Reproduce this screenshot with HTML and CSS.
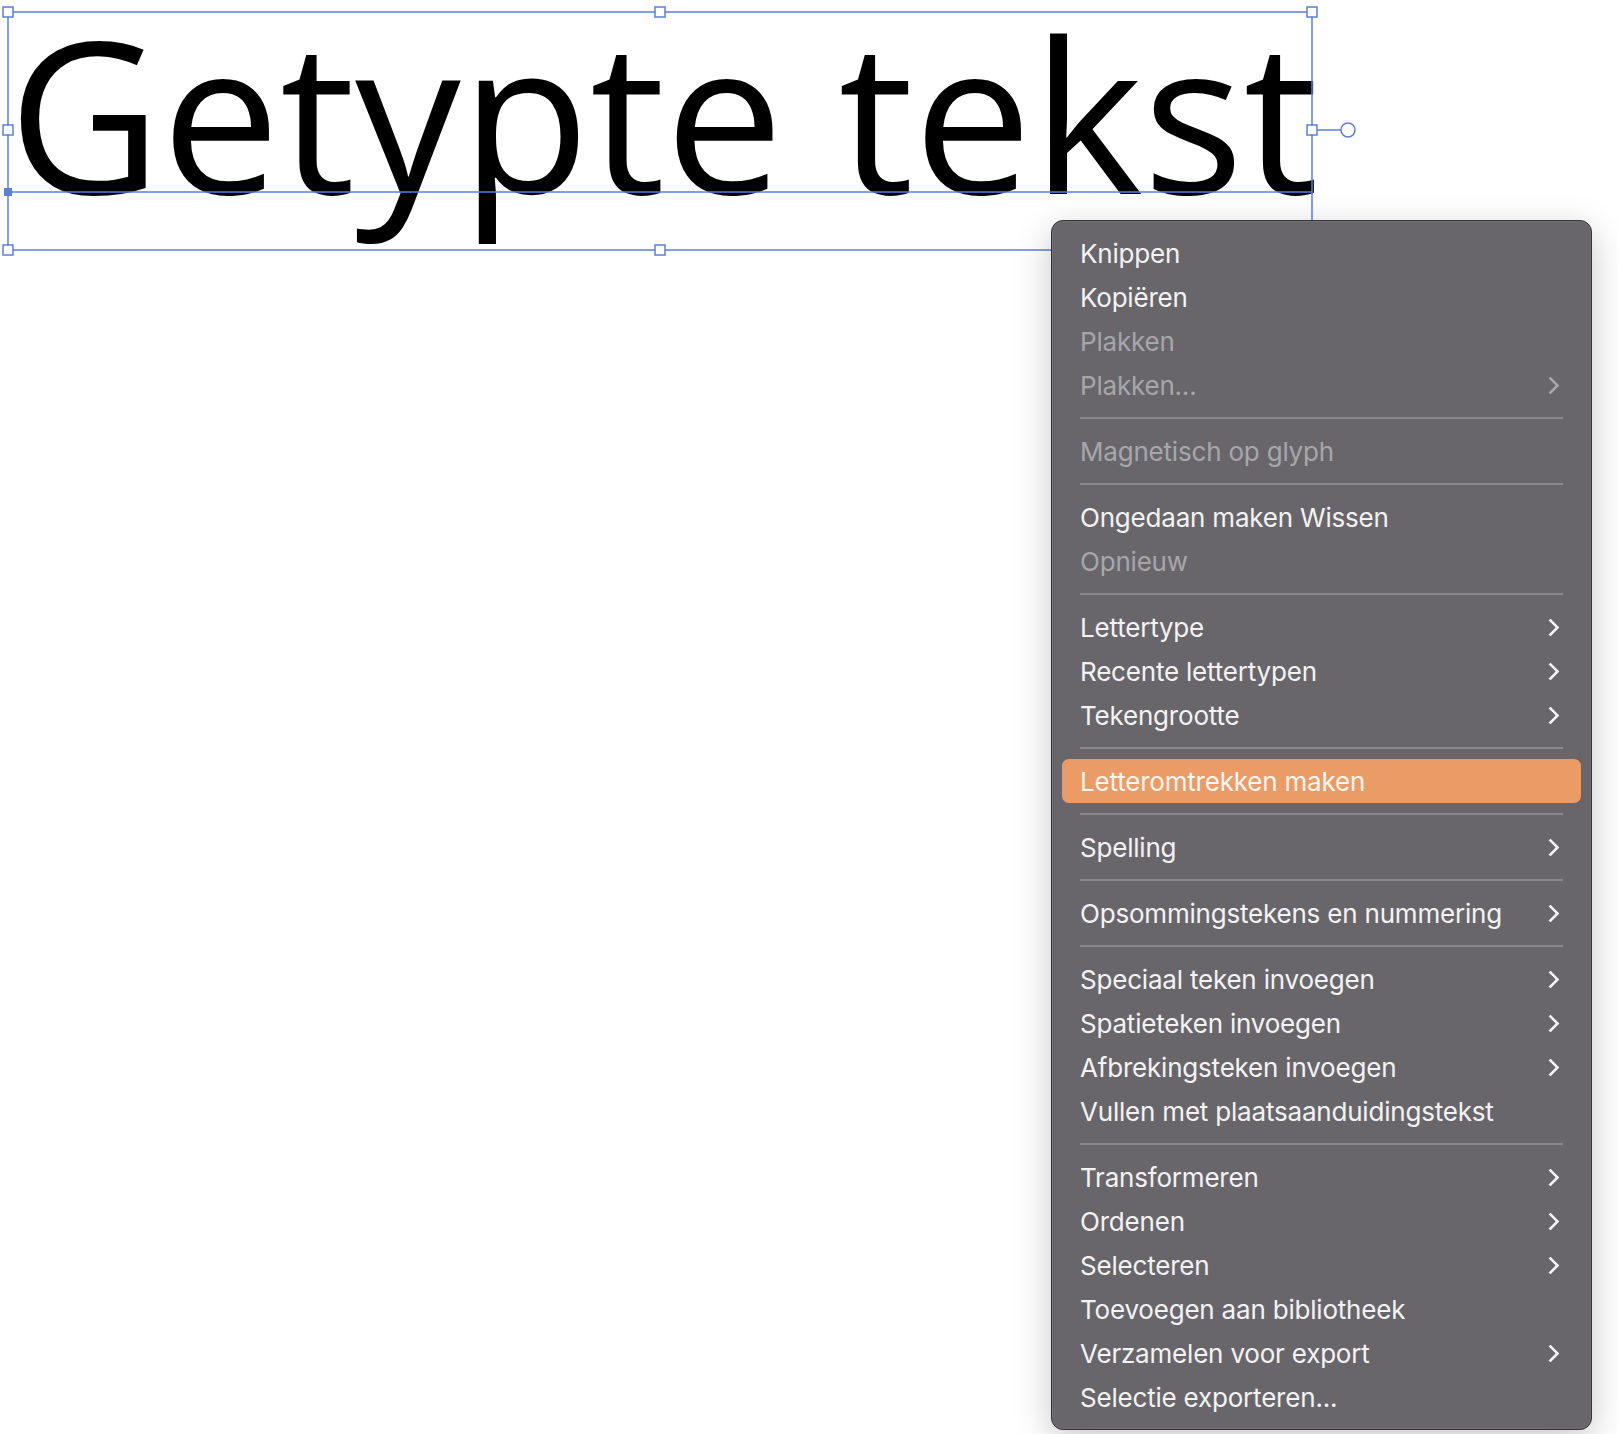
FILE: index.html
```html
<!DOCTYPE html>
<html lang="nl">
<head>
    <meta charset="UTF-8">
    <title>Tekstobject</title>
    <link rel="stylesheet" href="styles.css">
</head>
<body>
    <div class="artboard">
        <div class="text-frame">
            <span class="frame-text">Getypte tekst</span>
        </div>

        <!-- selection box, baseline and handles around the text frame -->
        <svg class="selection" width="1380" height="262" viewBox="0 0 1380 262">
            <g fill="none" stroke="#5b7fdb" stroke-width="1.5">
                <rect x="8" y="12" width="1304" height="238"/>
                <line x1="8" y1="192" x2="1312" y2="192"/>
                <line x1="1312" y1="130" x2="1341" y2="130"/>
                <circle cx="1348" cy="130" r="7" fill="#fff"/>
            </g>
            <g fill="#fff" stroke="#5b7fdb" stroke-width="1.5">
                <rect x="3" y="7" width="10" height="10"/>
                <rect x="655" y="7" width="10" height="10"/>
                <rect x="1307" y="7" width="10" height="10"/>
                <rect x="3" y="125" width="10" height="10"/>
                <rect x="1307" y="125" width="10" height="10"/>
                <rect x="3" y="245" width="10" height="10"/>
                <rect x="655" y="245" width="10" height="10"/>
                <rect x="1307" y="245" width="10" height="10"/>
            </g>
            <rect x="4" y="188" width="8" height="8" fill="#5b7fdb"/>
        </svg>

        <div class="context-menu">
            <div class="item">Knippen</div>
            <div class="item">Kopiëren</div>
            <div class="item disabled">Plakken</div>
            <div class="item disabled">Plakken...<span class="chevron"></span></div>
            <div class="separator"></div>
            <div class="item disabled">Magnetisch op glyph</div>
            <div class="separator"></div>
            <div class="item">Ongedaan maken Wissen</div>
            <div class="item disabled">Opnieuw</div>
            <div class="separator"></div>
            <div class="item">Lettertype<span class="chevron"></span></div>
            <div class="item">Recente lettertypen<span class="chevron"></span></div>
            <div class="item">Tekengrootte<span class="chevron"></span></div>
            <div class="separator"></div>
            <div class="item active">Letteromtrekken maken</div>
            <div class="separator"></div>
            <div class="item">Spelling<span class="chevron"></span></div>
            <div class="separator"></div>
            <div class="item">Opsommingstekens en nummering<span class="chevron"></span></div>
            <div class="separator"></div>
            <div class="item">Speciaal teken invoegen<span class="chevron"></span></div>
            <div class="item">Spatieteken invoegen<span class="chevron"></span></div>
            <div class="item">Afbrekingsteken invoegen<span class="chevron"></span></div>
            <div class="item">Vullen met plaatsaanduidingstekst</div>
            <div class="separator"></div>
            <div class="item">Transformeren<span class="chevron"></span></div>
            <div class="item">Ordenen<span class="chevron"></span></div>
            <div class="item">Selecteren<span class="chevron"></span></div>
            <div class="item">Toevoegen aan bibliotheek</div>
            <div class="item">Verzamelen voor export<span class="chevron"></span></div>
            <div class="item">Selectie exporteren...</div>
        </div>
    </div>
</body>
</html>
```

FILE: styles.css
```css
html, body {
    margin: 0;
    background: #fff;
}

.artboard {
    position: relative;
    width: 1618px;
    height: 1434px;
    overflow: hidden;
}

.text-frame {
    position: absolute;
    left: 8px;
    top: 12px;
    width: 1320px;
    height: 238px;
}

.frame-text {
    display: block;
    margin-top: -44px;
    font-family: "Open Sans", sans-serif;
    font-size: 211px;
    line-height: normal;
    color: #000;
    white-space: nowrap;
}

.selection {
    position: absolute;
    left: 0;
    top: 0;
}

/* context menu */
.context-menu {
    position: absolute;
    left: 1051px;
    top: 220px;
    width: 541px;
    box-sizing: border-box;
    padding: 10px 0;
    background: #68666b;
    border: 1px solid #343336;
    border-radius: 12px;
    box-shadow: inset 0 0 0 1px rgba(255, 255, 255, 0.06), 0 10px 36px rgba(0, 0, 0, 0.22);
    font-family: Inter, "Liberation Sans", sans-serif;
    font-size: 26px;
    letter-spacing: -0.2px;
    color: #f3f3f3;
}

.item {
    display: flex;
    align-items: center;
    justify-content: space-between;
    height: 44px;
    margin: 0 10px;
    padding: 0 21px 0 18px;
    border-radius: 7px;
    white-space: nowrap;
}

.item.disabled {
    color: #a7a6aa;
}

.item.active {
    background: #eb9b66;
    color: #fdf6f1;
}

.chevron {
    width: 10px;
    height: 10px;
    margin-right: 3px;
    border-top: 3px solid currentColor;
    border-right: 3px solid currentColor;
    border-radius: 1px;
    transform: rotate(45deg);
}

.separator {
    height: 2px;
    margin: 10px 28px;
    background: #8a888d;
}
```
